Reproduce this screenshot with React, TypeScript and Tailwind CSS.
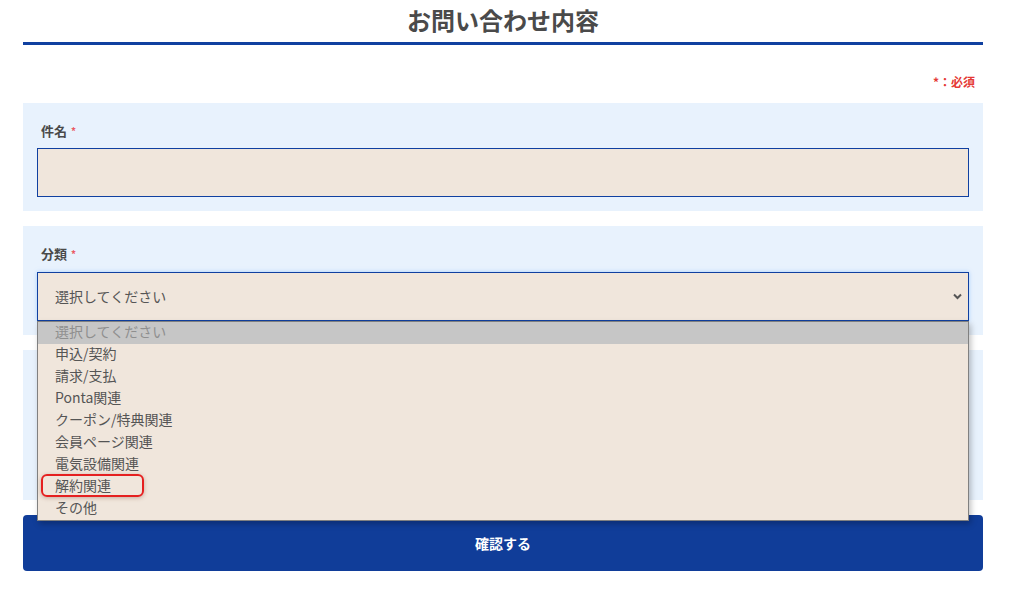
import React from "react";

const items = [
  "選択してください",
  "申込/契約",
  "請求/支払",
  "Ponta関連",
  "クーポン/特典関連",
  "会員ページ関連",
  "電気設備関連",
  "解約関連",
  "その他",
];

export default function App() {
  return (
    <div
      className="w-[1024px] h-[589px] bg-white overflow-hidden"
      style={{ fontFamily: '"Noto Sans CJK JP", "Noto Sans", sans-serif' }}
    >
      <div className="ml-[23px] w-[960px]">
        <div className="pt-[4px] pb-[6px] border-b-[3px] border-[#1040a0] text-center">
          <h1 className="text-[24px] leading-[32px] font-bold text-[#4a4a4a]">お問い合わせ内容</h1>
        </div>
        <div className="mt-[28px] mb-[12px] pr-[8px] text-right text-[12px] leading-[18px] font-bold text-[#e53935]">
          *：必須
        </div>

        <div className="bg-[#e8f2fd] px-[14px] pt-[17px] pb-[14px]">
          <div className="pl-[4px] h-[21px] mb-[7px] flex items-center text-[13px] font-bold text-[#4a4a4a]">
            件名<span className="ml-[4px] text-[10px] text-[#ea5a64]">*</span>
          </div>
          <div className="h-[49px] border border-[#1040a0] bg-[#f0e6dc]" />
        </div>

        <div className="relative mt-[15px] bg-[#e8f2fd] px-[14px] pt-[17px] pb-[14px]">
          <div className="pl-[4px] h-[21px] mb-[8px] flex items-center text-[13px] font-bold text-[#4a4a4a]">
            分類<span className="ml-[4px] text-[10px] text-[#ea5a64]">*</span>
          </div>
          <div className="relative h-[49px] border border-[#1040a0] bg-[#f0e6dc] flex items-center pl-[17px] pr-[5px] shadow-[0_0_4px_rgba(120,180,255,0.6)]">
            <span className="flex-1 pb-[1px] text-[14px] text-[#555555]">選択してください</span>
            <svg width="9" height="7" viewBox="0 0 9 7" className="mr-[1px]">
              <path d="M1 1.5 L4.5 5 L8 1.5" fill="none" stroke="#555555" strokeWidth="2" />
            </svg>
          </div>
          <div className="absolute left-[14px] right-[14px] top-[95px] z-10 border border-[#808080] bg-[#f0e6dc] shadow-[2px_3px_6px_rgba(0,0,0,0.25)]">
            {items.map((it, i) => (
              <div
                key={it}
                className={
                  i === 0
                    ? "h-[22px] pl-[17px] pb-[3px] flex items-center text-[14px] bg-[#c6c6c6] text-[#8f8f8f]"
                    : "h-[22px] pl-[17px] pb-[3px] flex items-center text-[14px] text-[#555555]"
                }
              >
                {it}
              </div>
            ))}
            <div className="absolute left-[3px] top-[152px] w-[103px] h-[23px] border-2 border-[#e52020] rounded-[6px] shadow-[0_1px_4px_rgba(120,60,40,0.35)]" />
          </div>
        </div>

        <div className="mt-[15px] h-[150px] bg-[#e8f2fd]" />

        <button className="mt-[15px] w-full h-[56px] rounded-[4px] bg-[#103d99] text-white text-[14px] font-bold flex items-center justify-center">
          確認する
        </button>
      </div>
    </div>
  );
}
